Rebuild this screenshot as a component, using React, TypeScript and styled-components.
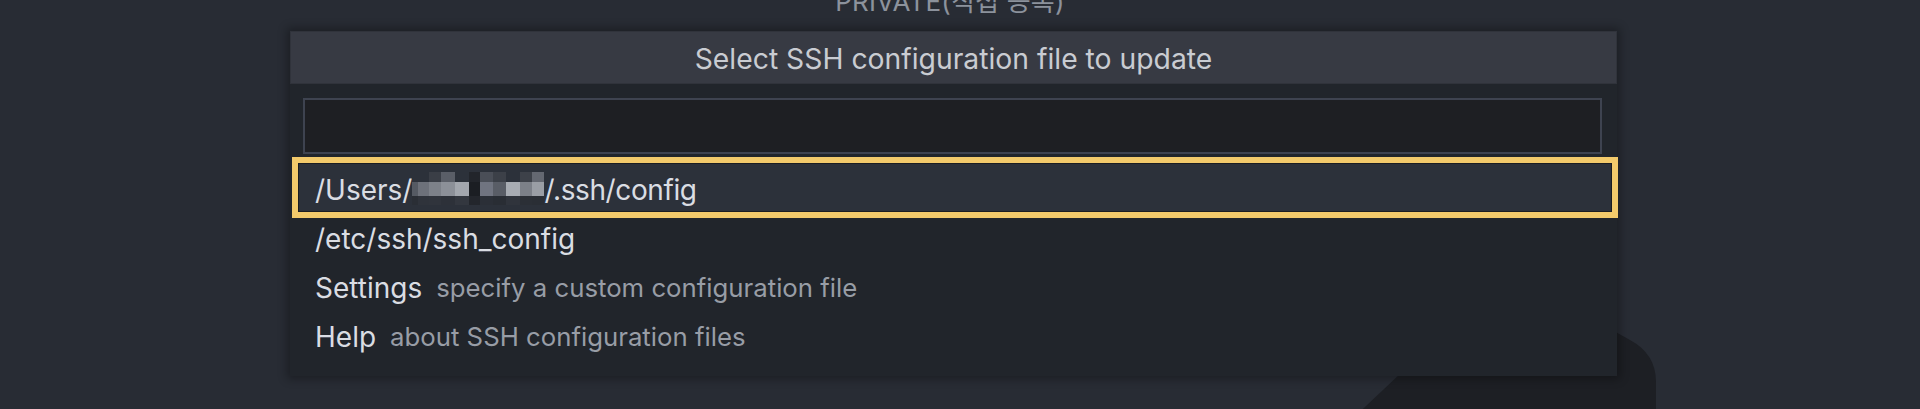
import React from "react";
import styled, { createGlobalStyle } from "styled-components";

const Global = createGlobalStyle`
  html, body {
    margin: 0;
    padding: 0;
    background: #282c34;
    overflow: hidden;
  }
  body {
    font-family: Inter, "Noto Sans", "Noto Sans CJK KR", sans-serif;
  }
`;

const Page = styled.div`
  position: relative;
  width: 1920px;
  height: 409px;
  overflow: hidden;
  background: #282c34;
`;

const Watermark = styled.svg`
  position: absolute;
  left: 0;
  top: 0;
  width: 1920px;
  height: 409px;
  z-index: 0;
`;

const Header = styled.div`
  position: relative;
  z-index: 1;
  height: 31px;
  display: flex;
  justify-content: center;
  padding-right: 20px;
  overflow: visible;
`;

const HeaderText = styled.span`
  margin-top: -11px;
  font-size: 26px;
  line-height: 26px;
  color: #8c929c;
  letter-spacing: 0.2px;
  white-space: nowrap;
`;

const Panel = styled.div`
  position: relative;
  z-index: 1;
  margin-left: 290px;
  width: 1327px;
  background: #21252b;
  box-shadow: 0 0 9px 3px rgba(0, 0, 0, 0.32);
  display: flex;
  flex-direction: column;
`;

const TitleBar = styled.div`
  height: 53px;
  box-sizing: border-box;
  background: #373a43;
  border: 1px solid #30333b;
  display: flex;
  align-items: center;
  justify-content: center;
  font-size: 28.3px;
  color: #c9ccd2;
  padding-top: 2px;
`;

const InputWrap = styled.div`
  padding: 14px 15px 9px 13px;
`;

const Input = styled.div`
  height: 56px;
  box-sizing: border-box;
  background: #1e1f23;
  border: 2px solid #3e4350;
`;

const List = styled.div`
  padding: 0 5px 17px 8px;
  display: flex;
  flex-direction: column;
`;

const Row = styled.div<{ $selected?: boolean }>`
  height: 49px;
  box-sizing: border-box;
  display: flex;
  align-items: center;
  padding: 4px 0 0 17px;
  font-size: 28px;
  color: #d6d9df;
  white-space: nowrap;
  background: ${(p) => (p.$selected ? "#2c313a" : "transparent")};
  outline: ${(p) => (p.$selected ? "6px solid #f3ca6b" : "none")};
  box-shadow: ${(p) => (p.$selected ? "inset 0 0 0 1px #1b1d22" : "none")};
`;

const Label = styled.span<{ $tight?: boolean }>`
  color: #dadde3;
  letter-spacing: ${(p) => (p.$tight ? "-0.4px" : "0")};
`;

const Description = styled.span`
  margin-left: 14px;
  font-size: 0.92em;
  color: #989da6;
`;

const Mosaic = styled.span`
  display: inline-flex;
  height: 33px;
  align-self: center;
  transform: translateY(-1px);
`;

const MosaicCol = styled.span<{ $w: number; $t: string; $m: string; $b: string }>`
  display: inline-flex;
  flex-direction: column;
  width: ${(p) => p.$w}px;
  & > i:nth-child(1) { height: 10px; background: ${(p) => p.$t}; }
  & > i:nth-child(2) { height: 14px; background: ${(p) => p.$m}; }
  & > i:nth-child(3) { height: 9px; background: ${(p) => p.$b}; }
`;

const bg = "#2c313a";
const cols: [number, string, string, string][] = [
  [6, bg, "#555a63", "#2a2e35"],
  [11, bg, "#6d717a", "#2f333b"],
  [12, "#3a3e46", "#7d8189", "#30343c"],
  [14, "#5a5e67", "#8c9098", "#2d3139"],
  [14, bg, "#a3a7ae", "#33373f"],
  [11, "#22252b", "#1b1e23", "#23262c"],
  [13, "#4a4e57", "#707480", "#2b2f37"],
  [13, "#3c4048", "#595d66", "#292d34"],
  [14, bg, "#a8acb3", "#30343c"],
  [12, "#3d4149", "#7c8088", "#2b2f36"],
  [12, "#646871", "#9a9ea5", "#2a2e35"],
];

function LogoShape() {
  return (
    <Watermark viewBox="0 0 1920 409">
      <path
        d="M 1330 440 L 1508 272 L 1630 340 Q 1656 354 1656 382 L 1656 440 Z"
        fill="#1d1f24"
      />
    </Watermark>
  );
}

export default function App() {
  return (
    <>
      <Global />
      <Page>
        <LogoShape />
        <Header>
          <HeaderText>PRIVATE(직접 등록)</HeaderText>
        </Header>
        <Panel>
          <TitleBar>Select SSH configuration file to update</TitleBar>
          <InputWrap>
            <Input />
          </InputWrap>
          <List>
            <Row $selected>
              <Label>/Users/</Label>
              <Mosaic>
                {cols.map(([w, t, m, b], i) => (
                  <MosaicCol key={i} $w={w} $t={t} $m={m} $b={b}>
                    <i />
                    <i />
                    <i />
                  </MosaicCol>
                ))}
              </Mosaic>
              <Label $tight>/.ssh/config</Label>
            </Row>
            <Row>
              <Label>/etc/ssh/ssh_config</Label>
            </Row>
            <Row>
              <Label>Settings</Label>
              <Description>specify a custom configuration file</Description>
            </Row>
            <Row>
              <Label>Help</Label>
              <Description>about SSH configuration files</Description>
            </Row>
          </List>
        </Panel>
      </Page>
    </>
  );
}
